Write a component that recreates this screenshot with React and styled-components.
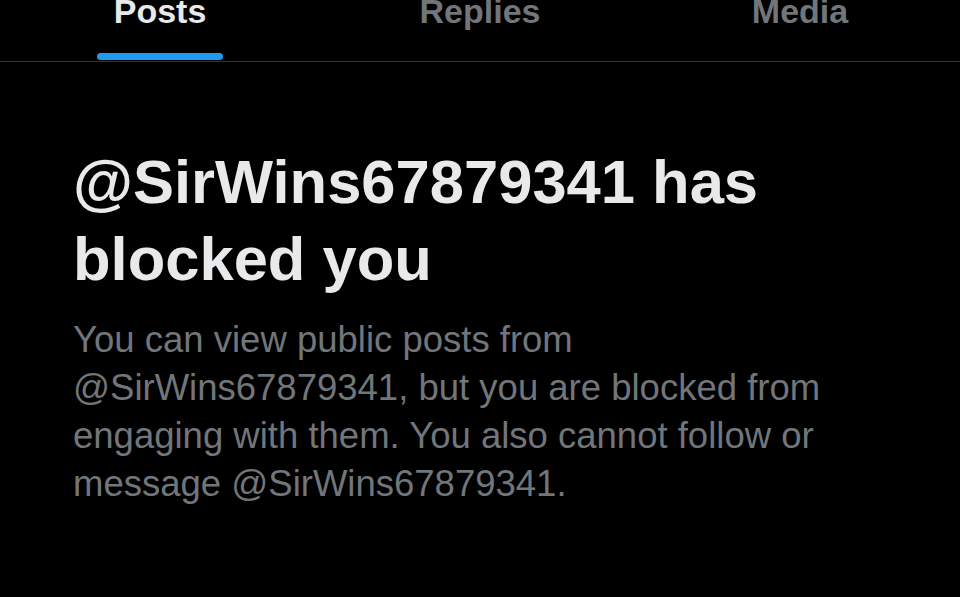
import React from 'react';
import styled, { createGlobalStyle } from 'styled-components';

const GlobalStyle = createGlobalStyle`
  html, body {
    margin: 0;
    padding: 0;
    background: #000;
  }
  body {
    font-family: "Liberation Sans", Arial, sans-serif;
    overflow: hidden;
  }
`;

const Page = styled.div`
  width: 960px;
  height: 597px;
  background: #000;
  display: flex;
  flex-direction: column;
`;

const TabBar = styled.nav`
  display: flex;
  border-bottom: 1px solid #2f3336;
  height: 61px;
`;

const Tab = styled.div`
  flex: 1;
  display: flex;
  flex-direction: column;
  align-items: center;
`;

const TabLabel = styled.span`
  font-size: 34px;
  line-height: 22px;
  font-weight: 700;
  color: ${(p) => (p.$active ? '#e7e9ea' : '#71767b')};
`;

const Indicator = styled.div`
  margin-top: 31px;
  width: 126px;
  height: 7px;
  border-radius: 4px;
  background: ${(p) => (p.$active ? '#1d9bf0' : 'transparent')};
`;

const Notice = styled.section`
  padding: 81px 73px 0;
  display: flex;
  flex-direction: column;
`;

const Title = styled.h1`
  margin: 0;
  font-size: 61.5px;
  line-height: 77px;
  font-weight: 700;
  color: #e7e9ea;
`;

const Message = styled.p`
  margin: 19px 0 0;
  font-size: 36.5px;
  line-height: 48px;
  color: #71767b;
`;

const tabs = ['Posts', 'Replies', 'Media'];

function App() {
  return (
    <>
      <GlobalStyle />
      <Page>
        <TabBar>
          {tabs.map((t, i) => (
            <Tab key={t}>
              <TabLabel $active={i === 0}>{t}</TabLabel>
              <Indicator $active={i === 0} />
            </Tab>
          ))}
        </TabBar>
        <Notice>
          <Title>@SirWins67879341 has blocked you</Title>
          <Message>
            You can view public posts from @SirWins67879341, but you are blocked
            from engaging with them. You also cannot follow or message
            @SirWins67879341.
          </Message>
        </Notice>
      </Page>
    </>
  );
}

export default App;
